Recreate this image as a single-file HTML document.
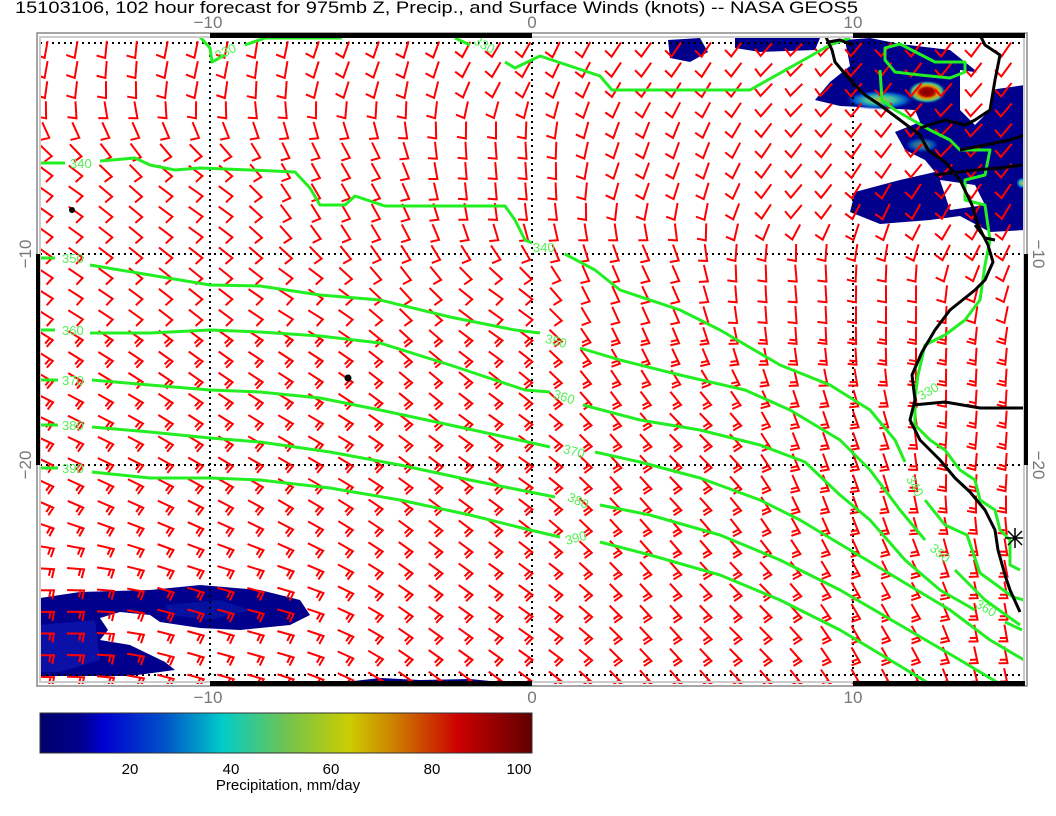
<!DOCTYPE html>
<html><head><meta charset="utf-8"><style>
html,body{margin:0;padding:0;background:#fff;width:1056px;height:816px;overflow:hidden}
svg{display:block}
text{font-family:"Liberation Sans",sans-serif}
</style></head><body>
<svg id="s" width="1056" height="816" viewBox="0 0 1056 816" xmlns="http://www.w3.org/2000/svg">
<defs>
<linearGradient id="cb" x1="0" x2="1" y1="0" y2="0">
<stop offset="0" stop-color="#00006a"/><stop offset="0.08" stop-color="#00008c"/>
<stop offset="0.13" stop-color="#0000d0"/><stop offset="0.25" stop-color="#0050c8"/>
<stop offset="0.33" stop-color="#00a0c8"/><stop offset="0.37" stop-color="#00ccc8"/>
<stop offset="0.5" stop-color="#70c450"/><stop offset="0.63" stop-color="#cccc00"/>
<stop offset="0.72" stop-color="#cc8000"/><stop offset="0.85" stop-color="#cc0000"/>
<stop offset="1" stop-color="#600000"/></linearGradient>
<radialGradient id="hot" cx="0.5" cy="0.5" r="0.5">
<stop offset="0" stop-color="#700000"/><stop offset="0.35" stop-color="#b00000"/>
<stop offset="0.55" stop-color="#e0a000"/><stop offset="0.75" stop-color="#40c0a0"/>
<stop offset="1" stop-color="#00008c" stop-opacity="0"/></radialGradient>
<radialGradient id="warm" cx="0.5" cy="0.5" r="0.5">
<stop offset="0" stop-color="#c0c040"/><stop offset="0.4" stop-color="#40c0a0"/>
<stop offset="0.7" stop-color="#0060d0"/><stop offset="1" stop-color="#00008c" stop-opacity="0"/></radialGradient>
<clipPath id="fr"><rect x="40" y="37" width="984" height="647"/></clipPath>
</defs>
<rect width="1056" height="816" fill="#fff"/>
<text x="15" y="13" font-size="17" textLength="843" lengthAdjust="spacingAndGlyphs" fill="#000">15103106, 102 hour forecast for 975mb Z, Precip., and Surface Winds (knots) -- NASA GEOS5</text>

<g clip-path="url(#fr)">
<!-- precip -->
<g fill="#00008c">
<path d="M845,40 L870,38 L900,44 L950,50 L975,70 L990,90 L1025,85 L1025,230 L990,232 L960,216 L930,220 L880,224 L850,212 L855,192 L900,180 L935,172 L925,160 L905,150 L895,132 L920,122 L915,110 L880,108 L840,106 L815,100 L830,82 L850,66 Z"/>
<path d="M735,38 L820,38 L815,50 L760,52 L735,48 Z"/>
<path d="M668,40 L700,38 L708,52 L690,62 L670,58 Z"/>
<path d="M40,598 L80,592 L150,590 L200,585 L260,590 L300,600 L310,615 L290,625 L240,630 L200,628 L160,622 L150,615 L120,612 L100,618 L108,630 L100,640 L130,645 L165,662 L175,670 L130,676 L40,676 Z"/>
<path d="M345,682 L380,678 L420,680 L470,679 L500,682 L345,684Z"/>
</g>
<path d="M40,625 L95,620 L100,660 L60,672 L40,672Z" fill="#1018b0" opacity="0.7"/>
<path d="M165,605 L220,600 L250,610 L210,620 L170,615Z" fill="#0818a8" opacity="0.7"/>
<g fill="#fff"><path d="M960,70 L995,75 L990,110 L975,125 L960,110 Z"/><path d="M940,180 L975,185 L985,205 L950,210Z"/></g>
<ellipse cx="880" cy="100" rx="36" ry="10" fill="url(#warm)"/>
<ellipse cx="927" cy="92" rx="20" ry="12" fill="url(#hot)"/>
<ellipse cx="922" cy="145" rx="18" ry="8" fill="url(#warm)" opacity="0.6"/>
<ellipse cx="1022" cy="183" rx="6" ry="6" fill="url(#warm)"/>

<!-- grid -->
<g stroke="#000" stroke-width="2" stroke-dasharray="2,4" fill="none">
<path d="M210,43V675M532,43V675M853,43V675M40,43H1024M40,254H1024M40,465H1024M40,675H1024"/>
</g>

<g id="barbs" stroke="#f00" stroke-width="2" fill="none" stroke-linecap="square"></g>

<!-- contours -->
<g stroke="#22ee22" stroke-width="3" fill="none" stroke-linejoin="round">
<path d="M200,37 L210,48 L212,62 L225,55"/>
<path d="M245,45 L265,38 L342,38"/>
<path d="M455,38 L470,45"/>
<path d="M505,62 L515,68 L540,56 L600,76 L612,90 L750,90 L800,62 L830,45 L850,38"/>
<path d="M40,163 L65,163"/>
<path d="M100,161 L135,158 L150,165 L175,170 L200,168 L250,170 L295,172 L310,188 L320,205 L345,205 L355,196 L385,206 L505,206 L515,220 L525,240 L532,243"/>
<path d="M565,254 L595,270 L620,290 L680,310 L720,330 L780,365 L830,385 L870,410 L895,440 L905,462"/>
<path d="M925,500 L945,525 L967,535 L980,573 L1013,597 L1024,600"/>
<path d="M40,258 L55,258"/>
<path d="M90,265 L150,275 L210,285 L260,286 L320,295 L380,300 L450,317 L515,330 L540,333"/>
<path d="M580,348 L620,360 L680,375 L745,390 L790,410 L840,440 L870,470 L900,510 L925,540"/>
<path d="M955,570 L985,600 L1020,625"/>
<path d="M40,330 L55,330"/>
<path d="M90,333 L150,333 L210,330 L260,332 L320,336 L380,343 L450,365 L525,390 L550,392"/>
<path d="M583,405 L640,420 L700,430 L760,445 L805,462 L840,495 L870,520 L905,560 L940,590 L975,610"/>
<path d="M1005,622 L1022,630"/>
<path d="M40,380 L58,380"/>
<path d="M92,380 L150,385 L210,390 L260,392 L320,398 L380,410 L450,425 L510,438 L550,447"/>
<path d="M595,452 L640,462 L700,478 L760,500 L800,520 L850,550 L900,580 L950,610 L990,640 L1024,660"/>
<path d="M40,425 L58,425"/>
<path d="M92,427 L150,432 L210,438 L260,442 L330,452 L400,465 L470,480 L530,492 L555,497"/>
<path d="M600,505 L650,515 L720,535 L780,560 L840,590 L900,625 L960,660 L1000,684"/>
<path d="M40,468 L58,468"/>
<path d="M92,472 L150,478 L210,478 L260,480 L330,488 L400,500 L470,515 L530,530 L560,537"/>
<path d="M600,542 L650,555 L720,575 L780,600 L840,630 L890,660 L930,684"/>
<path d="M885,48 L900,44 L935,62 L965,62 L965,72 L950,78 L920,75 L895,72 L885,60Z"/>
<path d="M880,70 L882,100 L895,110 L930,130 L950,140 L960,150 L990,150 L985,175 L965,180 L965,200 L985,205 L990,240 L985,265 L980,300 L965,320 L945,335 L925,345 L918,375 L915,398"/>
<path d="M915,405 L915,425 L930,440 L945,450 L960,470 L975,480 L980,500 L995,510 L1000,530 L1010,540 L1010,565 L1020,570"/>
</g>
<g fill="#55ee55" font-size="13">
<text x="215" y="55" transform="rotate(-25 228 52)">330</text>
<text x="472" y="50" transform="rotate(30 485 48)">330</text>
<text x="70" y="168">340</text>
<text x="533" y="252">340</text>
<text x="62" y="263">350</text>
<text x="545" y="346" transform="rotate(15 558 342)">350</text>
<text x="62" y="335">360</text>
<text x="553" y="402" transform="rotate(18 566 398)">360</text>
<text x="62" y="385">370</text>
<text x="563" y="456" transform="rotate(15 575 452)">370</text>
<text x="62" y="430">380</text>
<text x="567" y="506" transform="rotate(25 580 502)">380</text>
<text x="62" y="473">390</text>
<text x="565" y="542" transform="rotate(-15 577 538)">390</text>
<text x="905" y="490" transform="rotate(60 915 485)">340</text>
<text x="928" y="558" transform="rotate(40 940 555)">350</text>
<text x="975" y="612" transform="rotate(30 985 608)">360</text>
<text x="918" y="395" transform="rotate(-30 930 392)">330</text>
</g>

<!-- coastline -->
<g stroke="#000" stroke-width="3" fill="none" stroke-linejoin="round">
<path d="M825,35 L832,50 L835,62 L852,82 L865,95 L880,105 L900,120 L920,135 L928,150 L945,162 L960,180 L972,205 L978,225 L988,245 L993,262 L985,280 L975,290 L950,310 L935,330 L922,352 L912,375 L915,400 L910,420 L920,440 L940,460 L955,478 L970,492 L985,510 L995,530 L998,550 L1005,575 L1010,590 L1020,612"/>
<path d="M913,405 L945,402 L980,408 L1025,408"/>
<path d="M980,35 L985,45 L1000,55 L995,80 L990,110 L975,120 L965,125 L945,120 L920,128"/>
<path d="M960,150 L985,145 L1010,140 L1025,135"/>
<path d="M935,175 L975,170 L1000,168 L1022,165"/>
<path d="M852,45 L840,40 L828,42"/>
<path d="M975,225 L985,238 L995,240"/>
</g>
<g stroke="#000" stroke-width="1.5"><path d="M1005,538 H1025 M1015,528 V548 M1008,531 L1022,545 M1022,531 L1008,545"/></g>
<circle cx="72" cy="210" r="3" fill="#000"/><circle cx="348" cy="378" r="3.5" fill="#000"/>
</g>

<!-- frame -->
<rect x="37" y="33" width="990" height="653" fill="none" stroke="#888" stroke-width="1.5"/>
<rect x="40" y="37" width="984" height="645" fill="none" stroke="#ccc" stroke-width="2"/>
<g fill="#000">
<rect x="210" y="33" width="322" height="5"/><rect x="853" y="33" width="172" height="5"/>
<rect x="210" y="681" width="322" height="5"/><rect x="853" y="681" width="172" height="5"/>
<rect x="36" y="254" width="4" height="211"/><rect x="1024" y="254" width="4" height="211"/>
</g>
<g fill="#777" font-size="17" text-anchor="middle">
<text x="208" y="28">−10</text><text x="532" y="28">0</text><text x="853" y="28">10</text>
<text x="208" y="703">−10</text><text x="532" y="703">0</text><text x="853" y="703">10</text>
<text transform="translate(31,254) rotate(-90)">−10</text>
<text transform="translate(31,465) rotate(-90)">−20</text>
<text transform="translate(1033,254) rotate(90)">−10</text>
<text transform="translate(1033,465) rotate(90)">−20</text>
</g>

<!-- colorbar -->
<rect x="40" y="713" width="492" height="40" fill="url(#cb)" stroke="#333" stroke-width="1"/>
<g font-size="15" fill="#000" text-anchor="middle">
<text x="130" y="774">20</text><text x="231" y="774">40</text><text x="331" y="774">60</text><text x="432" y="774">80</text><text x="519" y="774">100</text>
<text x="288" y="790">Precipitation, mm/day</text>
</g>
</svg>
<script>
(function(){
var S=[[50,60,280],[200,60,282],[350,60,290],[500,60,300],[650,60,305],[800,80,315],[950,150,315],
[50,200,215],[200,200,215],[350,180,240],[500,170,265],[650,170,290],[800,200,310],[950,220,300],
[50,320,212],[300,320,212],[500,320,215],[650,280,245],[800,280,265],[900,300,270],
[50,450,205],[300,450,210],[500,450,215],[700,450,225],[850,450,250],[980,450,275],
[50,620,180],[250,620,195],[500,620,215],[750,620,225],[900,620,240],[1000,620,260]];
function ang(x,y){var sx=0,sy=0;for(var i=0;i<S.length;i++){var dx=x-S[i][0],dy=y-S[i][1];var w=1/Math.pow(dx*dx+dy*dy+100,1.5);var a=S[i][2]*Math.PI/180;sx+=w*Math.cos(a);sy+=w*Math.sin(a);}return Math.atan2(sy,sx);}
var d="";
for(var r=0;r<31;r++){var y=50+r*20+r*r*0.03;
 for(var c=0;c<33;c++){var x=46+c*30;
  var a=ang(x,y),L=16,B=8;
  var ux=Math.cos(a),uy=Math.sin(a);
  var vx=x-ux*L/2,vy=y-uy*L/2;
  var ex=vx+ux*L,ey=vy+uy*L;
  var b=a-80*Math.PI/180;
  var bx=vx+Math.cos(b)*B,by=vy+Math.sin(b)*B;
  d+="M"+ex.toFixed(1)+","+ey.toFixed(1)+"L"+vx.toFixed(1)+","+vy.toFixed(1)+"L"+bx.toFixed(1)+","+by.toFixed(1);
  if(y>330){var v2x=vx+ux*3.5,v2y=vy+uy*3.5;d+="M"+v2x.toFixed(1)+","+v2y.toFixed(1)+"l"+(Math.cos(b)*6).toFixed(1)+","+(Math.sin(b)*6).toFixed(1);}
 }}
var p=document.createElementNS("http://www.w3.org/2000/svg","path");p.setAttribute("d",d);
document.getElementById("barbs").appendChild(p);
})();
</script>
</body></html>
